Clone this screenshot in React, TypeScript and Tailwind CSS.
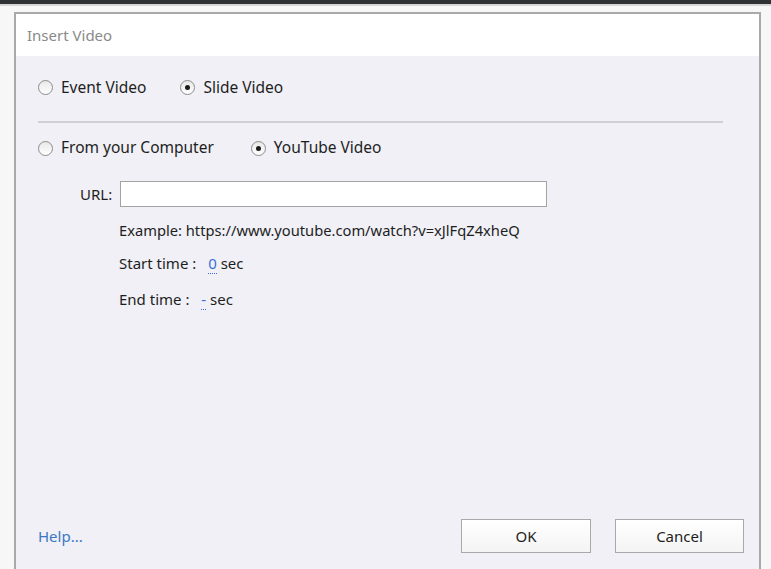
import React, { useState } from "react";

function Radio({ checked, label, onClick }: { checked: boolean; label: string; onClick: () => void }) {
  return (
    <button type="button" onClick={onClick} className="flex items-center gap-[8px] text-[15.5px] text-[#1e1e1e]">
      <span className="flex h-[15px] w-[15px] items-center justify-center rounded-full border border-[#8c8c8c] bg-gradient-to-b from-[#e8e8e8] to-white">
        {checked && <span className="h-[5px] w-[5px] rounded-full bg-[#1a1a1a]" />}
      </span>
      <span>{label}</span>
    </button>
  );
}

export default function App() {
  const [kind, setKind] = useState("slide");
  const [source, setSource] = useState("youtube");
  const [url, setUrl] = useState("");

  return (
    <div className="h-[569px] w-[771px] overflow-hidden bg-[#f7f7f7]" style={{ fontFamily: '"Noto Sans", "Open Sans", sans-serif' }}>
      <div className="h-[4px] bg-[#2f3133]" />
      <div className="h-[2px] bg-[#d6d6d6]" />
      <div className="ml-[14px] mt-[6px] flex h-[563px] w-[747px] flex-col border-l-2 border-r-2 border-t-2 border-[#a9a9a9]">
        <div className="flex h-[42px] items-center bg-white pl-[11px] text-[15px] text-[#8a8a8a]">Insert Video</div>
        <div className="flex flex-1 flex-col bg-[#f0f0f6] pl-[22px] pr-[15px]">
          <div className="flex h-[63px] items-center gap-[34px]">
            <Radio checked={kind === "event"} label="Event Video" onClick={() => setKind("event")} />
            <Radio checked={kind === "slide"} label="Slide Video" onClick={() => setKind("slide")} />
          </div>
          <div className="mt-[2px] h-[2px] w-[685px] bg-[#cfcfd4]" />
          <div className="flex h-[50px] items-center gap-[37px]">
            <Radio checked={source === "computer"} label="From your Computer" onClick={() => setSource("computer")} />
            <Radio checked={source === "youtube"} label="YouTube Video" onClick={() => setSource("youtube")} />
          </div>
          <div className="flex items-center pl-[42px] pt-[8px] text-[15px] text-[#1e1e1e]">
            <span className="w-[40px]">URL:</span>
            <input
              value={url}
              onChange={(e) => setUrl(e.target.value)}
              className="h-[26px] w-[427px] border border-[#a3a3a3] bg-white px-1 text-[13px] outline-none"
            />
          </div>
          <div className="flex flex-col pl-[81px] text-[#1e1e1e]">
            <div className="mt-[12px] text-[14.7px]">Example: https://www.youtube.com/watch?v=xJlFqZ4xheQ</div>
            <div className="mt-[11px] text-[15px]">
              Start time :{" "}
              <span className="ml-[8px] border-b border-dotted border-[#3a6fd8] text-[#3a6fd8]">0</span> sec
            </div>
            <div className="mt-[13px] text-[15px]">
              End time :{" "}
              <span className="ml-[8px] border-b border-dotted border-[#3a6fd8] text-[#3a6fd8]">-</span> sec
            </div>
          </div>
          <div className="mt-auto mb-[22px] flex items-center">
            <a className="cursor-pointer text-[15px] text-[#3b78c3]">Help...</a>
            <div className="ml-auto flex gap-[24px]">
              <button className="h-[34px] w-[130px] border border-[#a9a9a9] bg-gradient-to-b from-white to-[#f4f4f4] text-[15px] text-[#1e1e1e]">OK</button>
              <button className="h-[34px] w-[129px] border border-[#a9a9a9] bg-gradient-to-b from-white to-[#f4f4f4] text-[15px] text-[#1e1e1e]">Cancel</button>
            </div>
          </div>
        </div>
      </div>
    </div>
  );
}
